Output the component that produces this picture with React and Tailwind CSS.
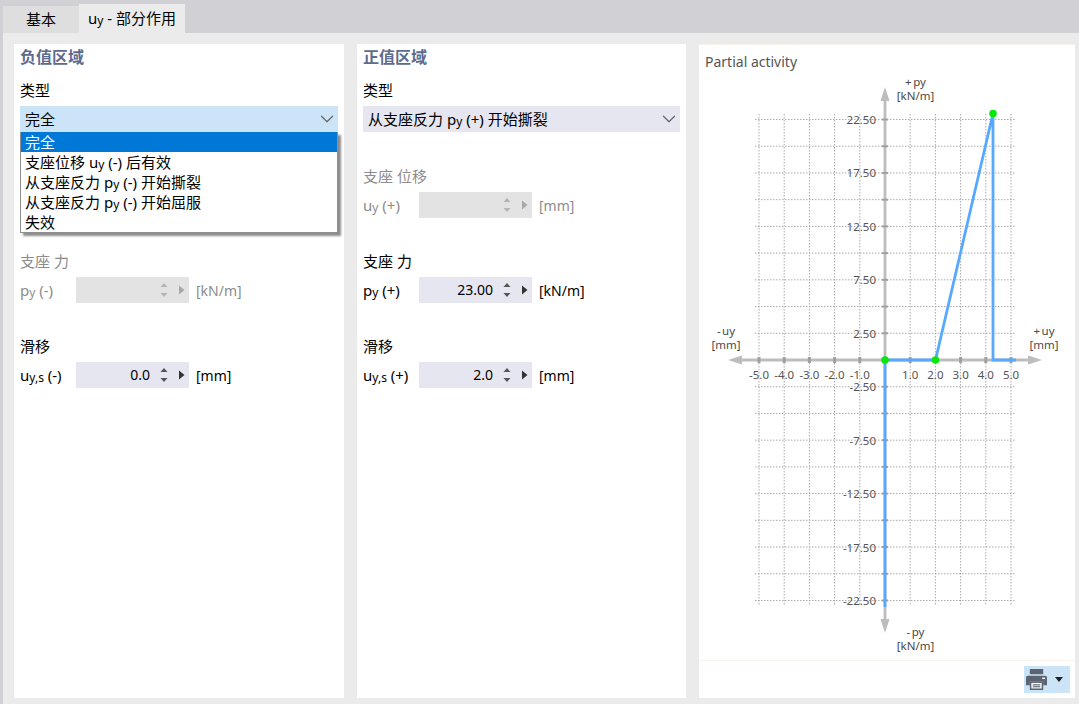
import React from "react";
import { ChevronDown } from "lucide-react";

const options = [
  ["完全"],
  ["支座位移 ", "u", " (-) ", "后有效"],
  ["从支座反力 ", "p", " (-) ", "开始撕裂"],
  ["从支座反力 ", "p", " (-) ", "开始屈服"],
  ["失效"],
];

const L = ({ children }) => <span className="text-[15px]">{children}</span>;

const Sub = ({ base, s = "y" }) => (
  <span className="text-[15px]">
    {base}
    <span className="align-[-1px] text-[12px]">{s}</span>
  </span>
);

const Spinner = ({ value, disabled }) => (
  <div
    className={
      "flex h-[26px] w-[113px] items-center " +
      (disabled ? "bg-[#e3e3e3]" : "bg-[#e6e6f0]")
    }
  >
    <span className="flex-1 pr-[9px] text-right text-[14px] leading-none">{value}</span>
    <svg width="10" height="18" viewBox="0 0 10 18" className="shrink-0">
      <path d="M5 2 L8.5 6 H1.5 Z" fill={disabled ? "#b4b4b4" : "#555"} />
      <path d="M1.5 12 H8.5 L5 16 Z" fill={disabled ? "#b4b4b4" : "#555"} />
    </svg>
    <svg width="8" height="10" viewBox="0 0 8 10" className="ml-[9px] mr-[3px] shrink-0">
      <path d="M1 0.5 L6.5 5 L1 9.5 Z" fill={disabled ? "#a8a8a8" : "#333"} />
    </svg>
  </div>
);

const Group = ({ title, label, value, unit, disabled, top, hidden }) => (
  <div
    className={
      (top ? "mt-[34px] " : "mt-[33px] ") +
      (hidden ? "invisible " : "") +
      (disabled ? "text-[#8c8c8c]" : "text-black")
    }
  >
    <div className="h-[20px] leading-[20px]">{title}</div>
    <div className="mt-[6px] flex h-[26px] items-center">
      <div className="w-[56px]">{label}</div>
      <Spinner value={value} disabled={disabled} />
      <div className="ml-[7px] text-[14px]">{unit}</div>
    </div>
  </div>
);

const Combo = ({ active, children }) => (
  <div
    className={
      "flex h-[26px] items-center justify-between pl-[5px] " +
      (active ? "bg-[#cce4f7]" : "bg-[#e6e6f0]")
    }
  >
    <span>{children}</span>
    <ChevronDown size={22} strokeWidth={1.3} className="text-[#666]" />
  </div>
);

const xTicks = [-5, -4, -3, -2, -1, 0, 1, 2, 3, 4, 5];
const yTicks = [-9, -8, -7, -6, -5, -4, -3, -2, -1, 0, 1, 2, 3, 4, 5, 6, 7, 8, 9];
const px = (v) => 885 + v * 25.2;
const py = (v) => 360 - v * 26.72;
const yLabels = [9, 7, 5, 3, 1, -1, -3, -5, -7, -9];

const Chart = () => (
  <svg
    width="376"
    height="587"
    viewBox="699 72 376 587"
    className="block"
    fontFamily="'Noto Sans', sans-serif"
  >
    {/* grid */}
    {xTicks.map((v) => (
      <line
        key={"gx" + v}
        x1={px(v)}
        x2={px(v)}
        y1="114"
        y2="605"
        stroke="#aaaaaa"
        strokeDasharray="1.5 1.5"
      />
    ))}
    {yTicks.map((v) => (
      <line
        key={"gy" + v}
        x1="755"
        x2="1015"
        y1={py(v)}
        y2={py(v)}
        stroke="#aaaaaa"
        strokeDasharray="1.5 1.5"
      />
    ))}
    {/* axes */}
    <line x1="885" x2="885" y1="96" y2="624" stroke="#bdbdbd" strokeWidth="2.8" />
    <line x1="738" x2="1034" y1="360" y2="360" stroke="#bdbdbd" strokeWidth="2.8" />
    <path d="M885 87 L889.5 101 H880.5 Z" fill="#bdbdbd" />
    <path d="M885 633 L889.5 619 H880.5 Z" fill="#bdbdbd" />
    <path d="M728 360 L742 355.5 V364.5 Z" fill="#bdbdbd" />
    <path d="M1042 360 L1028 355.5 V364.5 Z" fill="#bdbdbd" />
    {xTicks.map((v) => (
      <rect key={"tx" + v} x={px(v) - 1.5} y="357" width="3" height="6" fill="#a0a0a0" />
    ))}
    {yTicks.map((v) => (
      <rect key={"ty" + v} x="882" y={py(v) - 1} width="6" height="2" fill="#a0a0a0" />
    ))}
    {/* line */}
    <path
      d="M885 607 V360 H935.5 L993 113.5 V360 H1016"
      fill="none"
      stroke="#57a9ff"
      strokeWidth="2.8"
    />
    <circle cx="885" cy="360" r="3.8" fill="#0be60b" />
    <circle cx="935.5" cy="360" r="3.8" fill="#0be60b" />
    <circle cx="993" cy="113.5" r="3.8" fill="#0be60b" />
    {/* labels */}
    <g fontSize="11.5" fill="#555">
      {yLabels.map((v) => (
        <text key={"ly" + v} x="876" y={py(v) + 4.5} textAnchor="end">
          {(v * 2.5).toFixed(2)}
        </text>
      ))}
      {xTicks
        .filter((v) => v !== 0)
        .map((v) => (
          <text key={"lx" + v} x={px(v)} y="379" textAnchor="middle">
            {v.toFixed(1)}
          </text>
        ))}
    </g>
    <g fontSize="11.5" fill="#4a4a4a" textAnchor="middle" wordSpacing="-1.5">
      <text x="915.5" y="86">+ py</text>
      <text x="915.5" y="100">[kN/m]</text>
      <text x="726" y="335">- uy</text>
      <text x="726" y="349">[mm]</text>
      <text x="1044" y="335">+ uy</text>
      <text x="1044" y="349">[mm]</text>
      <text x="915.5" y="636">- py</text>
      <text x="915.5" y="650">[kN/m]</text>
    </g>
  </svg>
);

const PrinterIcon = () => (
  <svg width="21" height="21" viewBox="0 0 22 22">
    <rect x="4" y="0" width="14" height="5.5" fill="#5b6470" />
    <path d="M0 9 Q0 7 2 7 H20 Q22 7 22 9 V17 H18 V13 H4 V17 H0 Z" fill="#5b6470" />
    <rect x="17" y="9" width="3" height="1.5" fill="#fff" />
    <rect x="4.8" y="13.8" width="12.4" height="7.4" fill="#fff" stroke="#5b6470" strokeWidth="1.6" />
    <rect x="7" y="16" width="8" height="1.2" fill="#5b6470" />
    <rect x="7" y="18" width="8" height="1.2" fill="#5b6470" />
  </svg>
);

export default function App() {
  return (
    <div
      className="flex h-[704px] w-[1079px] flex-col overflow-hidden bg-[#d1d0d5] text-[15px] text-black"
      style={{ fontFamily: "'Noto Sans', 'Noto Sans CJK SC', sans-serif" }}
    >
      {/* tabs */}
      <div className="flex h-[33px] items-end pl-[3px]">
        <div className="flex h-[27px] w-[76px] items-center justify-center bg-[#dedede]">基本</div>
        <div className="flex h-[29px] w-[106px] items-center justify-center bg-[#ebebeb]">
          <Sub base="u" />
          <L>&nbsp;-&nbsp;</L>部分作用
        </div>
      </div>

      <div className="ml-[3px] flex flex-1 gap-[13px] bg-[#ebebeb] pb-[6px] pl-[11px] pr-[4px] pt-[11px]">
        {/* negative */}
        <div className="relative w-[330px] bg-white px-[6px] pt-[3px]">
          <div className="h-[20px] text-[16px] font-bold leading-[20px] text-[#5d6b8e]">负值区域</div>
          <div className="mt-[13px] h-[20px] leading-[20px]">类型</div>
          <div className="mt-[6px]">
            <Combo active>完全</Combo>
          </div>
          <Group top hidden disabled title="支座 位移" label={<><Sub base="u" /><L> (-)</L></>} unit="[mm]" />
          <Group disabled title="支座 力" label={<><Sub base="p" /><L> (-)</L></>} unit="[kN/m]" />
          <Group title="滑移" label={<><Sub base="u" s="y,s" /><L> (-)</L></>} value="0.0" unit="[mm]" />

          {/* open dropdown */}
          <div className="absolute left-[6px] top-[88px] w-[318px] border border-t-0 border-[#8f8f8f] bg-white shadow-[3px_3px_2px_rgba(0,0,0,0.45)]">
            {options.map((o, i) => (
              <div
                key={i}
                className={
                  "h-[20px] pl-[4px] leading-[20px] " +
                  (i === 0 ? "bg-[#0078d7] text-white" : "text-black")
                }
              >
                {o.length === 1 ? o[0] : (
                  <>
                    {o[0]}
                    <Sub base={o[1]} />
                    <L>{o[2]}</L>
                    {o[3]}
                  </>
                )}
              </div>
            ))}
          </div>
        </div>

        {/* positive */}
        <div className="w-[329px] bg-white px-[6px] pt-[3px]">
          <div className="h-[20px] text-[16px] font-bold leading-[20px] text-[#5d6b8e]">正值区域</div>
          <div className="mt-[13px] h-[20px] leading-[20px]">类型</div>
          <div className="mt-[6px]">
            <Combo>从支座反力 <Sub base="p" /><L> (+) </L>开始撕裂</Combo>
          </div>
          <Group top disabled title="支座 位移" label={<><Sub base="u" /><L> (+)</L></>} unit="[mm]" />
          <Group title="支座 力" label={<><Sub base="p" /><L> (+)</L></>} value="23.00" unit="[kN/m]" />
          <Group title="滑移" label={<><Sub base="u" s="y,s" /><L> (+)</L></>} value="2.0" unit="[mm]" />
        </div>

        {/* chart */}
        <div className="flex w-[376px] flex-col bg-white">
          <div className="h-[617px] border-y border-[#f7f3ea]">
            <div className="h-[27px] pl-[6px] pt-[7px] text-[14px] leading-[20px] text-[#555]">Partial activity</div>
            <Chart />
          </div>
          <div className="flex flex-1 items-center justify-end pr-[5px]">
            <div className="flex h-[27px] w-[46px] items-center gap-[8px] bg-[#cce4f7] pl-[2px]">
              <PrinterIcon />
              <svg width="8" height="5" viewBox="0 0 8 5">
                <path d="M0 0 H8 L4 5 Z" fill="#222" />
              </svg>
            </div>
          </div>
        </div>
      </div>
    </div>
  );
}
